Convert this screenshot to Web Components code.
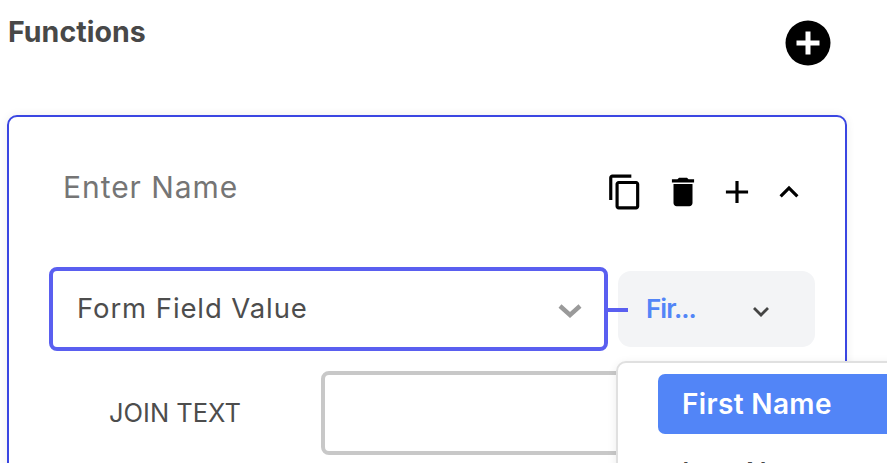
<!DOCTYPE html>
<html lang="en"><head><meta charset="utf-8"><title>Functions</title>
<style>
html,body{margin:0;padding:0;width:887px;height:463px;overflow:hidden;background:#fff;font-family:Inter,"Noto Sans",sans-serif;}
</style></head><body>
<fn-panel>
  <fn-card>
    <fn-card-head slot="head"></fn-card-head>
    <fn-select-row slot="select"></fn-select-row>
    <fn-join-row slot="join"></fn-join-row>
  </fn-card>
</fn-panel>
<script>
function def(name, html){
  customElements.define(name, class extends HTMLElement{
    constructor(){super();this.attachShadow({mode:'open'}).innerHTML=html;}
  });
}
def('fn-panel',`<style>
:host{display:block;width:887px;height:463px;overflow:hidden;color:#484848}
.head{display:flex;justify-content:space-between;height:115px;padding-left:8px;padding-right:56px;box-sizing:border-box}
h2{margin:15px 0 0;font:700 28.5px/34px Inter,sans-serif;letter-spacing:.05px;color:#484848}
svg{display:block;margin-top:20px;width:46px;height:46px}
.body{padding-left:7px}
</style>
<div class="head"><h2>Functions</h2>
<svg viewBox="0 0 46 46"><circle cx="23" cy="23" r="22.5" fill="#000"/><path d="M20.5 11.5h5v9h9v5h-9v9h-5v-9h-9v-5h9z" fill="#fff"/></svg></div>
<div class="body"><slot></slot></div>`);
def('fn-card',`<style>
:host{display:block;width:840px;height:420px;box-sizing:border-box;border:2px solid #3a46e2;border-radius:10px;box-shadow:0 0 10px rgba(0,0,0,.07);background:#fff}
</style><slot name="head"></slot><slot name="select"></slot><slot name="join"></slot>`);
const ic=(d,ml)=>`<svg style="margin-left:${ml}px" viewBox="0 0 24 24"><path d="${d}"/></svg>`;
def('fn-card-head',`<style>
:host{display:flex;justify-content:space-between;align-items:flex-start;height:150px;box-sizing:border-box;padding-left:54px;padding-right:37px}
.name{margin-top:50px;font:400 30px/40px Inter,sans-serif;color:#757575;letter-spacing:.95px}
.icons{display:flex;margin-top:55.5px}
svg{width:38px;height:38px;display:block;fill:#000}
</style><div class="name">Enter Name</div><div class="icons">
${ic('M16 1H4c-1.1 0-2 .9-2 2v14h2V3h12V1zm3 4H8c-1.1 0-2 .9-2 2v14c0 1.1.9 2 2 2h11c1.1 0 2-.9 2-2V7c0-1.1-.9-2-2-2zm0 16H8V7h11v14z',0)}
${ic('M6 19c0 1.1.9 2 2 2h8c1.1 0 2-.9 2-2V7H6v12zM19 4h-3.5l-1-1h-5l-1 1H5v2h14V4z',20)}
${ic('M19 13h-6v6h-2v-6H5v-2h6V5h2v6h6v2z',16)}
${ic('M12 8l-6 6 1.41 1.41L12 10.83l4.59 4.58L18 14z',14.5)}
</div>`);
def('fn-select-row',`<style>
:host{display:flex;align-items:center;position:relative;height:84px;margin-left:40px;width:766px}
.main{flex:none;width:559px;height:84px;box-sizing:border-box;border:4px solid #5a5ff0;border-radius:8px;display:flex;align-items:center;justify-content:space-between;padding:0 24px;font:400 27.5px/34px Inter,sans-serif;color:#4d4d4d;letter-spacing:.9px;background:#fff}
.main span{margin-top:-2px}
.main svg{width:26px;height:16px;margin-right:-3px;margin-top:3px}
.conn{position:absolute;left:559px;top:41px;width:20px;height:4px;background:#5a5ff0}
.sub{flex:none;margin-left:10px;width:197px;height:76px;box-sizing:border-box;background:#f3f4f6;border-radius:13px;display:flex;align-items:center;justify-content:space-between;padding:0 45px 0 28px;font:600 26px/34px Inter,sans-serif;color:#5285f7}
.sub span{letter-spacing:-.95px}
.sub svg{width:18px;height:12px;margin-top:6px}
.menu{position:absolute;left:567px;top:94px;width:321px;height:120px;box-sizing:border-box;border:2px solid #e0e0e0;border-radius:10px;background:#fff;box-shadow:0 2px 10px rgba(0,0,0,.08);padding:11px 0 0 40px;z-index:2;font:600 28px/34px Inter,sans-serif}
.opt{height:60px;box-sizing:border-box;padding:0 0 1px 24px;display:flex;align-items:center;background:#5285f7;color:#fff;border-radius:7px;letter-spacing:.35px}
.opt2{padding:22px 0 0 24px;color:#484848;font-weight:500}
</style>
<div class="main"><span>Form Field Value</span><svg viewBox="0 0 26 16"><path d="M3 3l10 9 10-9" fill="none" stroke="#9a9a9a" stroke-width="4.4"/></svg></div>
<div class="conn"></div>
<div class="sub"><span>Fir...</span><svg viewBox="0 0 18 12"><path d="M2 2l7 7 7-7" fill="none" stroke="#444" stroke-width="2.8"/></svg></div>
<div class="menu"><div class="opt">First Name</div><div class="opt2">Last Name</div></div>`);
def('fn-join-row',`<style>
:host{display:flex;align-items:center;height:84px;margin-top:20px;margin-left:100px}
.label{width:212px;font:400 25.5px/34px Inter,sans-serif;color:#4d4d4d}
.input{width:420px;height:84px;box-sizing:border-box;border:4px solid #c8c8c8;border-radius:8px;background:#fff}
</style><div class="label">JOIN TEXT</div><div class="input"></div>`);
</script>
</body></html>
